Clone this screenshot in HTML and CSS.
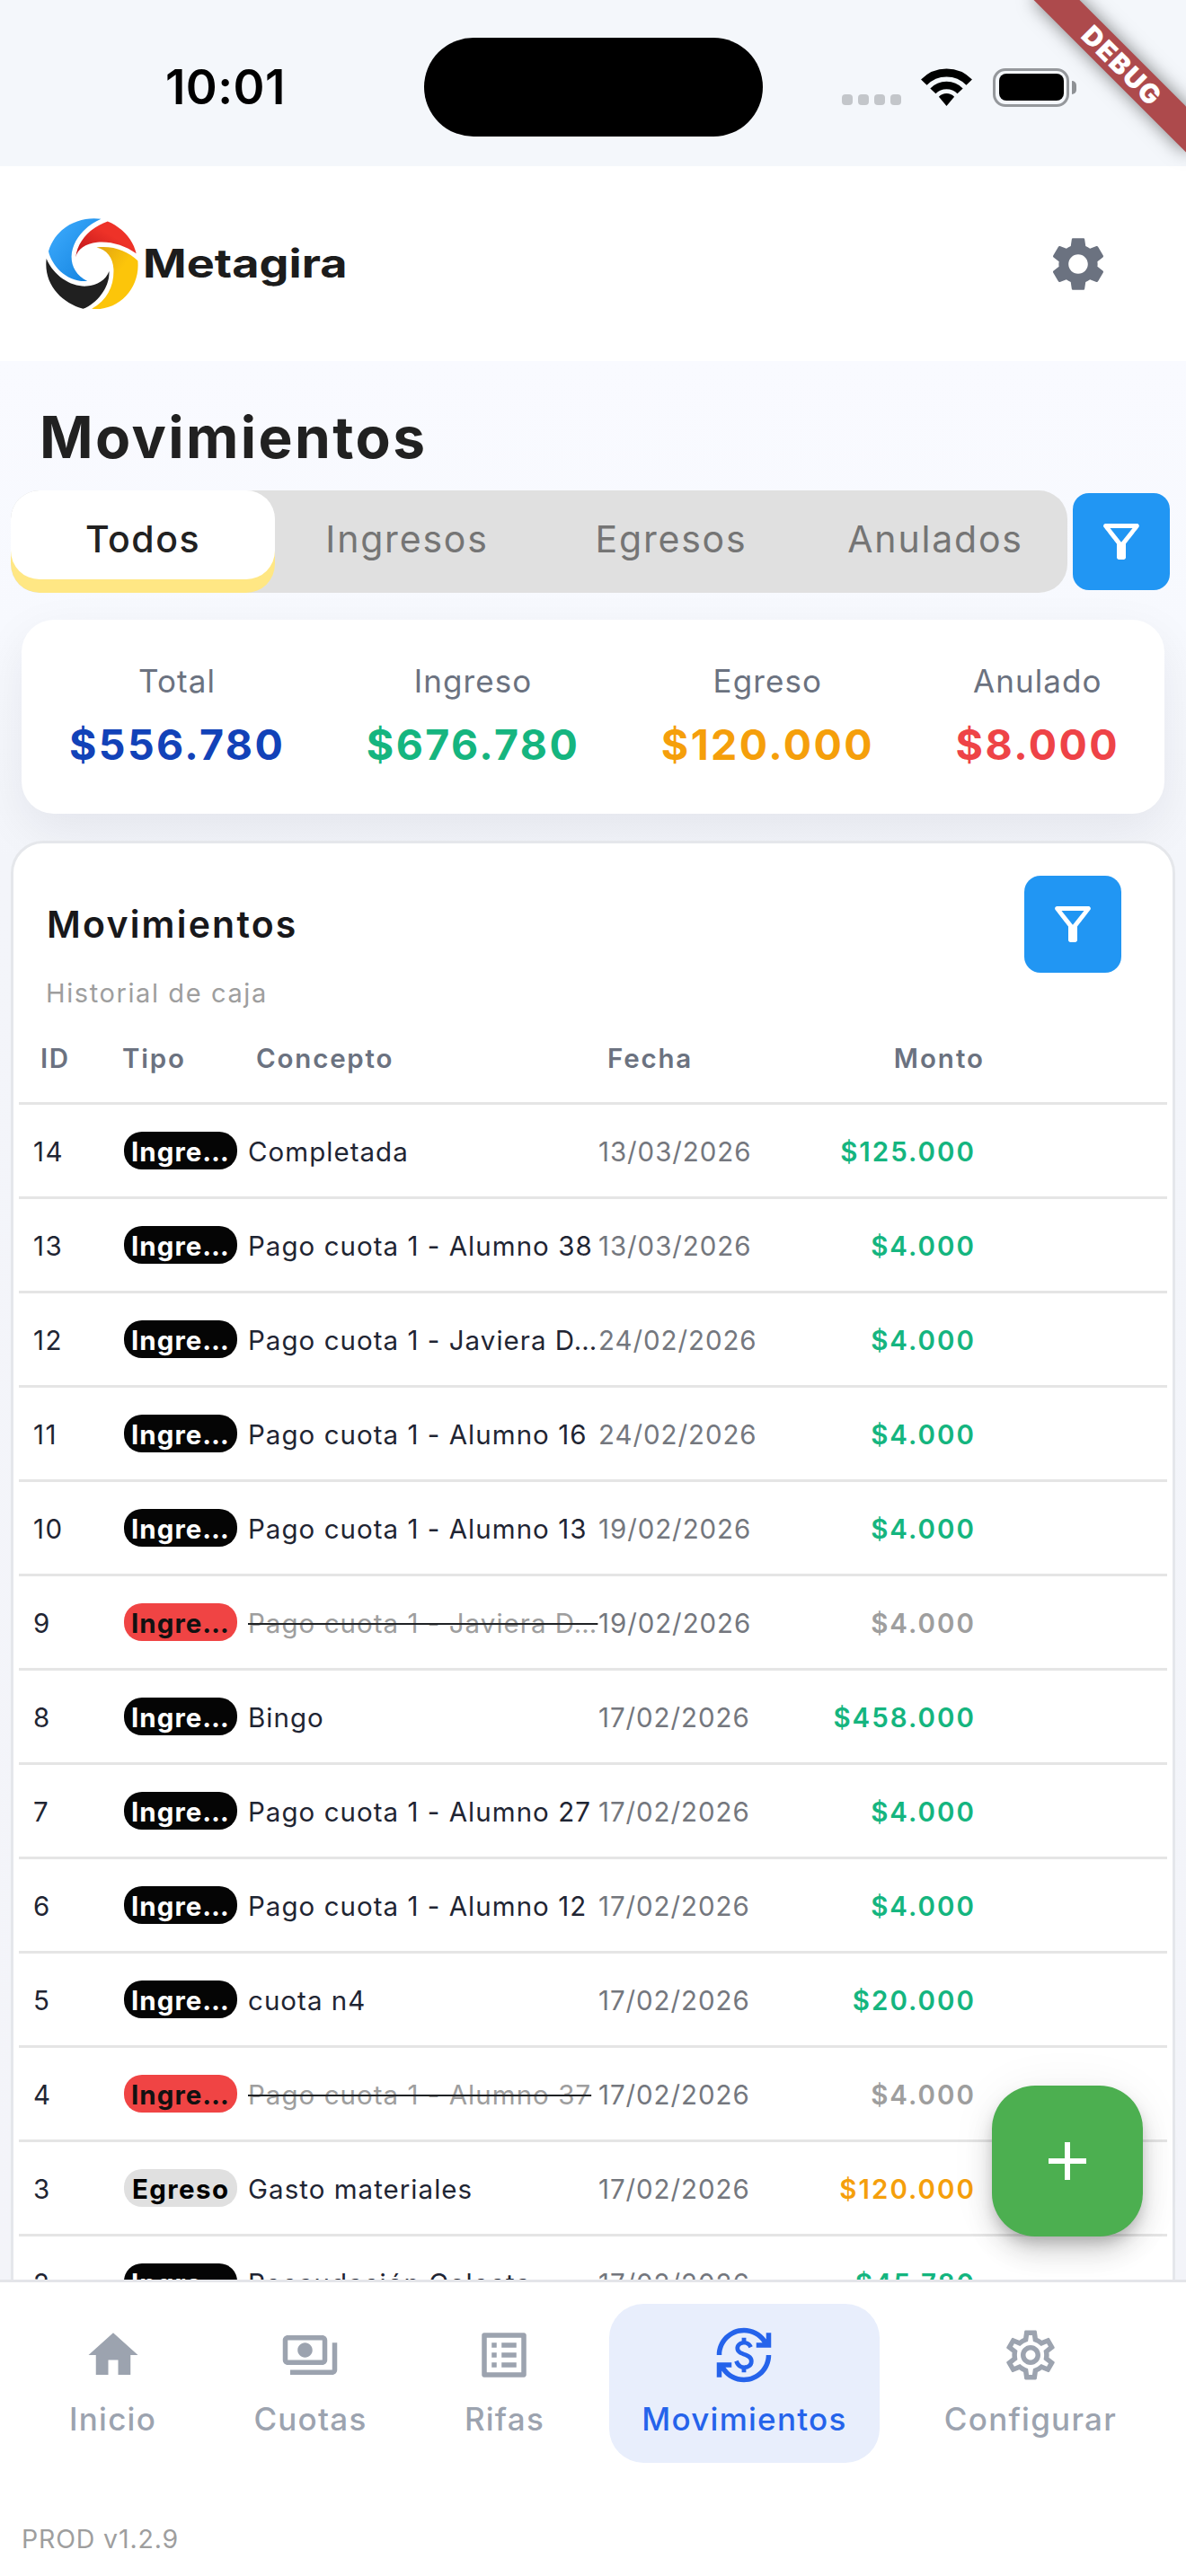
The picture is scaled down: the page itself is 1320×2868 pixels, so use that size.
FILE: index.html
```html
<!DOCTYPE html>
<html lang="es">
<head>
<meta charset="utf-8">
<title>Metagira - Movimientos</title>
<link rel="stylesheet" href="styles.css">
</head>
<body>
<div class="app">
  <div class="statusbar">
    <div class="time">10:01</div>
    <div class="island"></div>
    <div class="indicators">
      <div class="dots"><i></i><i></i><i></i><i></i></div>
      <svg class="wifi" viewBox="0 0 57 42" fill="none" stroke="#000">
        <path d="M3.3 15.7A35 35 0 0 1 53.7 15.7" stroke-width="9"/>
        <path d="M13.4 25.4A21 21 0 0 1 43.6 25.4" stroke-width="8.5"/>
        <path d="M19.9 31.7A12 12 0 0 1 37.1 31.7L28.5 42Z" fill="#000" stroke="none"/>
      </svg>
      <div class="battery"><div class="level"></div></div>
      <div class="nub"></div>
    </div>
  </div>

  <header class="header">
    <div class="brand">
      <svg class="logo" viewBox="33 40 310 306">
        <defs>
          <linearGradient id="blue" x1="0" y1="0" x2="1" y2="1"><stop offset="0.2" stop-color="#36a4f8"/><stop offset="1" stop-color="#0f7fdc"/></linearGradient>
          <linearGradient id="red" x1="0" y1="1" x2="1" y2="0"><stop offset="0.1" stop-color="#c4181c"/><stop offset="0.6" stop-color="#ee3228"/></linearGradient>
          <linearGradient id="yellow" x1="0" y1="0" x2="1" y2="1"><stop offset="0" stop-color="#dd9f12"/><stop offset="0.5" stop-color="#fcc50a"/></linearGradient>
        </defs>
        <path fill="url(#blue)" d="M218 42C150 32 68 65 42 150C52 198 105 256 172 250C136 232 119 202 119 168C121 112 165 65 218 42Z"/>
        <path fill="url(#red)" d="M240 50C285 68 325 108 336 158C298 130 250 116 205 120C165 125 140 142 133 170C140 115 180 72 240 50Z"/>
        <path fill="url(#yellow)" d="M203 137C260 130 308 150 341 182C350 270 280 352 187 343C240 312 262 265 260 210C258 170 237 145 203 137Z"/>
        <path fill="#202020" d="M35 175C60 235 120 270 170 267C205 265 235 245 245 217C248 270 205 325 158 343C85 322 25 260 35 175Z"/>
      </svg>
      <span class="wordmark">Metagira</span>
    </div>
    <svg class="gear" viewBox="0 0 24 24" fill="#6b7280"><path d="M19.14 12.94c.04-.3.06-.61.06-.94 0-.32-.02-.64-.07-.94l2.03-1.58c.18-.14.23-.41.12-.61l-1.92-3.32c-.12-.22-.37-.29-.59-.22l-2.39.96c-.5-.38-1.03-.7-1.62-.94l-.36-2.54c-.04-.24-.24-.41-.48-.41h-3.84c-.24 0-.43.17-.47.41l-.36 2.54c-.59.24-1.13.57-1.62.94l-2.39-.96c-.22-.08-.47 0-.59.22L2.74 8.87c-.12.21-.08.47.12.61l2.03 1.58c-.05.3-.09.63-.09.94s.02.64.07.94l-2.03 1.58c-.18.14-.23.41-.12.61l1.92 3.32c.12.22.37.29.59.22l2.39-.96c.5.38 1.03.7 1.62.94l.36 2.54c.05.24.24.41.48.41h3.84c.24 0 .44-.17.47-.41l.36-2.54c.59-.24 1.13-.56 1.62-.94l2.39.96c.22.08.47 0 .59-.22l1.92-3.32c.12-.22.07-.47-.12-.61l-2.01-1.58zM12 15.6c-1.98 0-3.6-1.62-3.6-3.6s1.62-3.6 3.6-3.6 3.6 1.62 3.6 3.6-1.62 3.6-3.6 3.6z"/></svg>
  </header>

  <main class="content">
    <h1 class="title">Movimientos</h1>

    <div class="filters">
      <div class="tabs">
        <div class="tab active">Todos</div>
        <div class="tab">Ingresos</div>
        <div class="tab">Egresos</div>
        <div class="tab">Anulados</div>
      </div>
      <button class="filter-btn"><svg viewBox="0 0 24 24" fill="#fff"><path d="M7 6h10l-5.01 6.3L7 6zm-2.75-.39C6.27 8.2 10 13 10 13v6c0 .55.45 1 1 1h2c.55 0 1-.45 1-1v-6s3.72-4.8 5.74-7.39A.998.998 0 0 0 18.95 4H5.04c-.83 0-1.3.95-.79 1.61z"/></svg></button>
    </div>

    <section class="summary">
      <div class="stat"><span class="label">Total</span><span class="value blue">$556.780</span></div>
      <div class="stat"><span class="label">Ingreso</span><span class="value green">$676.780</span></div>
      <div class="stat"><span class="label">Egreso</span><span class="value orange">$120.000</span></div>
      <div class="stat"><span class="label">Anulado</span><span class="value red">$8.000</span></div>
    </section>

    <section class="card">
      <div class="card-head">
        <h2>Movimientos</h2>
        <button class="filter-btn"><svg viewBox="0 0 24 24" fill="#fff"><path d="M7 6h10l-5.01 6.3L7 6zm-2.75-.39C6.27 8.2 10 13 10 13v6c0 .55.45 1 1 1h2c.55 0 1-.45 1-1v-6s3.72-4.8 5.74-7.39A.998.998 0 0 0 18.95 4H5.04c-.83 0-1.3.95-.79 1.61z"/></svg></button>
      </div>
      <p class="subtitle">Historial de caja</p>
      <div class="table">
        <div class="row head"><span class="id">ID</span><span>Tipo</span><span>Concepto</span><span>Fecha</span><span class="amount">Monto</span></div>
        <div class="row"><span class="id">14</span><span class="badge">Ingre…</span><span class="concept">Completada</span><span class="date">13/03/2026</span><span class="amount green">$125.000</span></div>
        <div class="row"><span class="id">13</span><span class="badge">Ingre…</span><span class="concept">Pago cuota 1 - Alumno 38</span><span class="date">13/03/2026</span><span class="amount green">$4.000</span></div>
        <div class="row"><span class="id">12</span><span class="badge">Ingre…</span><span class="concept">Pago cuota 1 - Javiera D…</span><span class="date">24/02/2026</span><span class="amount green">$4.000</span></div>
        <div class="row"><span class="id">11</span><span class="badge">Ingre…</span><span class="concept">Pago cuota 1 - Alumno 16</span><span class="date">24/02/2026</span><span class="amount green">$4.000</span></div>
        <div class="row"><span class="id">10</span><span class="badge">Ingre…</span><span class="concept">Pago cuota 1 - Alumno 13</span><span class="date">19/02/2026</span><span class="amount green">$4.000</span></div>
        <div class="row"><span class="id">9</span><span class="badge void">Ingre…</span><span class="concept"><s>Pago cuota 1 - Javiera D…</s></span><span class="date">19/02/2026</span><span class="amount muted">$4.000</span></div>
        <div class="row"><span class="id">8</span><span class="badge">Ingre…</span><span class="concept">Bingo</span><span class="date">17/02/2026</span><span class="amount green">$458.000</span></div>
        <div class="row"><span class="id">7</span><span class="badge">Ingre…</span><span class="concept">Pago cuota 1 - Alumno 27</span><span class="date">17/02/2026</span><span class="amount green">$4.000</span></div>
        <div class="row"><span class="id">6</span><span class="badge">Ingre…</span><span class="concept">Pago cuota 1 - Alumno 12</span><span class="date">17/02/2026</span><span class="amount green">$4.000</span></div>
        <div class="row"><span class="id">5</span><span class="badge">Ingre…</span><span class="concept">cuota n4</span><span class="date">17/02/2026</span><span class="amount green">$20.000</span></div>
        <div class="row"><span class="id">4</span><span class="badge void">Ingre…</span><span class="concept"><s>Pago cuota 1 - Alumno 37</s></span><span class="date">17/02/2026</span><span class="amount muted">$4.000</span></div>
        <div class="row"><span class="id">3</span><span class="badge expense">Egreso</span><span class="concept">Gasto materiales</span><span class="date">17/02/2026</span><span class="amount orange">$120.000</span></div>
        <div class="row"><span class="id">2</span><span class="badge">Ingre…</span><span class="concept">Recaudación Colecta</span><span class="date">17/02/2026</span><span class="amount green">$45.780</span></div>
      </div>
    </section>
    <button class="fab"><svg viewBox="0 0 24 24" fill="#fff"><path d="M19 13h-6v6h-2v-6H5v-2h6V5h2v6h6v2z"/></svg></button>
  </main>

  <footer class="bottom">
    <nav class="nav">
      <a class="item"><svg viewBox="0 0 24 24"><path d="M10 20v-6h4v6h5v-8h3L12 3 2 12h3v8z"/></svg><span>Inicio</span></a>
      <a class="item"><svg viewBox="0 0 24 24"><path d="M19 14V6c0-1.1-.9-2-2-2H3c-1.1 0-2 .9-2 2v8c0 1.1.9 2 2 2h14c1.1 0 2-.9 2-2zm-2 0H3V6h14v8zm-7-7c-1.66 0-3 1.34-3 3s1.34 3 3 3 3-1.34 3-3-1.34-3-3-3zm13 0v11c0 1.1-.9 2-2 2H4v-2h17V7h2z"/></svg><span>Cuotas</span></a>
      <a class="item"><svg viewBox="0 0 24 24"><path d="M19 5v14H5V5h14m1.1-2H3.9c-.5 0-.9.4-.9.9v16.2c0 .4.4.9.9.9h16.2c.4 0 .9-.5.9-.9V3.9c0-.5-.5-.9-.9-.9zM11 7h6v2h-6V7zm0 4h6v2h-6v-2zm0 4h6v2h-6v-2zM7 7h2v2H7V7zm0 4h2v2H7v-2zm0 4h2v2H7v-2z"/></svg><span>Rifas</span></a>
      <a class="item current"><svg viewBox="0 0 24 24"><path d="M12.89 11.1c-1.78-.59-2.64-.96-2.64-1.9 0-1.02 1.11-1.39 1.81-1.39 1.31 0 1.79.99 1.9 1.34l1.58-.67c-.15-.44-.82-1.91-2.66-2.23V5h-1.75v1.26c-2.6.56-2.62 2.85-2.62 2.96 0 2.27 2.25 2.91 3.35 3.31 1.58.56 2.28 1.07 2.28 2.03 0 1.13-1.05 1.61-1.98 1.61-1.82 0-2.34-1.87-2.4-2.09l-1.66.67c.63 2.19 2.28 2.78 3.02 2.96V19h1.75v-1.24c.52-.09 3.02-.59 3.02-3.22.01-1.39-.6-2.61-3-3.44zM3 21H1v-6h6v2H4.52c1.61 2.41 4.36 4 7.48 4 4.97 0 9-4.03 9-9h2c0 6.08-4.92 11-11 11-3.72 0-7.01-1.85-9-4.67V21zM1 12C1 5.92 5.92 1 12 1c3.72 0 7.01 1.85 9 4.67V3h2v6h-6V7h2.48C17.87 4.59 15.12 3 12 3c-4.97 0-9 4.03-9 9H1z"/></svg><span>Movimientos</span></a>
      <a class="item"><svg viewBox="0 0 24 24"><path d="M19.43 12.98c.04-.32.07-.64.07-.98 0-.34-.03-.66-.07-.98l2.11-1.65c.19-.15.24-.42.12-.64l-2-3.46c-.09-.16-.26-.25-.44-.25-.06 0-.12.01-.17.03l-2.49 1c-.52-.4-1.08-.73-1.69-.98l-.38-2.65C14.46 2.18 14.25 2 14 2h-4c-.25 0-.46.18-.49.42l-.38 2.65c-.61.25-1.17.59-1.69.98l-2.49-1c-.06-.02-.12-.03-.18-.03-.17 0-.34.09-.43.25l-2 3.46c-.13.22-.07.49.12.64l2.11 1.65c-.04.32-.07.65-.07.98 0 .33.03.66.07.98l-2.11 1.65c-.19.15-.24.42-.12.64l2 3.46c.09.16.26.25.44.25.06 0 .12-.01.17-.03l2.49-1c.52.4 1.08.73 1.69.98l.38 2.65c.03.24.24.42.49.42h4c.25 0 .46-.18.49-.42l.38-2.65c.61-.25 1.17-.59 1.69-.98l2.49 1c.06.02.12.03.18.03.17 0 .34-.09.43-.25l2-3.46c.12-.22.07-.49-.12-.64l-2.11-1.65zm-1.98-1.71c.04.31.05.52.05.73 0 .21-.02.43-.05.73l-.14 1.13.89.7 1.08.84-.7 1.21-1.27-.51-1.04-.42-.9.68c-.43.32-.84.56-1.25.73l-1.06.43-.16 1.13-.2 1.35h-1.4l-.19-1.35-.16-1.13-1.06-.43c-.43-.18-.83-.41-1.23-.71l-.91-.7-1.06.43-1.27.51-.7-1.21 1.08-.84.89-.7-.14-1.13c-.03-.31-.05-.54-.05-.74s.02-.43.05-.73l.14-1.13-.89-.7-1.08-.84.7-1.21 1.27.51 1.04.42.9-.68c.43-.32.84-.56 1.25-.73l1.06-.43.16-1.13.2-1.35h1.39l.19 1.35.16 1.13 1.06.43c.43.18.83.41 1.23.71l.91.7 1.06-.43 1.27-.51.7 1.21-1.07.85-.89.7.14 1.13zM12 8c-2.21 0-4 1.79-4 4s1.79 4 4 4 4-1.79 4-4-1.79-4-4-4zm0 6c-1.1 0-2-.9-2-2s.9-2 2-2 2 .9 2 2-.9 2-2 2z"/></svg><span>Configurar</span></a>
    </nav>
    <div class="version">PROD v1.2.9</div>
  </footer>

  <div class="debug"><div class="band">DEBUG</div></div>
</div>
</body>
</html>
```
FILE: styles.css
```css
* { box-sizing: border-box; }
body { margin: 0; font-family: Inter, "Liberation Sans", sans-serif; color: #212121; }
h1, h2, p { margin: 0; }
button { border: 0; padding: 0; }
svg { display: block; flex: none; }

.app {
  position: relative;
  width: 1320px;
  height: 2868px;
  display: flex;
  flex-direction: column;
  overflow: hidden;
  background: #f4f5fa;
}

/* status bar */
.statusbar {
  height: 185px;
  padding-top: 9px;
  display: grid;
  grid-template-columns: 472px 377px 471px;
  align-items: center;
  background: #f4f7fb;
}
.time { padding-left: 184px; font-size: 53px; font-weight: 600; letter-spacing: 0.45px; line-height: 64px; color: #000; }
.island { height: 110px; border-radius: 55px; background: #000; }
.indicators { display: flex; align-items: center; padding-left: 88px; }
.dots { display: flex; gap: 6px; margin: 28px 22px 0 0; }
.dots i { width: 12px; height: 12px; border-radius: 4px; background: #c3c6ca; }
.wifi { width: 57px; height: 42px; margin-right: 23px; }
.battery { width: 85px; height: 43px; padding: 3.5px; border: 3.5px solid #95989c; border-radius: 14px; }
.level { height: 100%; border-radius: 8px; background: #000; }
.nub { width: 5px; height: 15px; margin-left: 3px; border-radius: 0 5px 5px 0; background: #8e9195; }

/* brand header */
.header {
  height: 217px;
  padding: 0 84px 0 51px;
  display: flex;
  align-items: center;
  justify-content: space-between;
  background: #fff;
}
.brand { display: flex; align-items: center; gap: 5px; }
.logo { width: 103px; height: 102px; }
.wordmark { font-size: 44px; font-weight: 700; line-height: 54px; margin-top: -2px; color: #1c1c1c; transform: scaleX(1.187); transform-origin: left; }
.gear { width: 72px; height: 72px; }

/* content */
.content {
  position: relative;
  height: 2136px;
  overflow: hidden;
  padding: 26px 12px 0;
  background: linear-gradient(#f9faff, #f7f9fe 14%, #f3f5fa 26%, #f3f4f9);
}
.title { padding-left: 32px; font-size: 64px; font-weight: 700; letter-spacing: 2.4px; line-height: 118px; }

.filters { display: flex; align-items: center; justify-content: space-between; padding-right: 6px; }
.tabs { display: flex; width: 1176px; height: 114px; border-radius: 32px; background: #e0e0e0; overflow: hidden; }
.tab { flex: 1; height: 99px; text-align: center; font-size: 41px; letter-spacing: 1.8px; line-height: 109px; color: #757575; }
.tab.active { border-radius: 32px; background: #fff; box-shadow: 0 15px 0 #ffe784; color: #212121; font-weight: 500; letter-spacing: 1.5px; }

.filter-btn { display: grid; place-items: center; width: 108px; height: 108px; border-radius: 18px; background: #2196f3; }
.filter-btn svg { width: 60px; height: 60px; }

.summary {
  display: flex;
  justify-content: space-between;
  height: 216px;
  margin: 30px 12px;
  padding: 46px 50px 0 53px;
  border-radius: 36px;
  background: #fff;
  box-shadow: 0 18px 54px rgba(20, 20, 40, 0.07);
}
.stat { display: flex; flex-direction: column; align-items: center; gap: 18px; }
.label { font-size: 35px; letter-spacing: 1.1px; line-height: 45px; color: #6b7280; }
.value { font-size: 46.5px; font-weight: 700; letter-spacing: 2.4px; line-height: 60px; }

.blue { color: #1242b8; }
.green { color: #15b57f; }
.orange { color: #f59f0b; }
.red { color: #ee4347; }
.muted { color: #9e9e9e; }

.card {
  position: relative;
  height: 1700px;
  border: 3px solid #e5e7eb;
  border-radius: 36px;
  background: #fff;
}
.card-head { display: flex; align-items: center; justify-content: space-between; padding: 36px 57px 0 37px; }
.card-head h2 { font-size: 41px; font-weight: 600; letter-spacing: 2.2px; line-height: 50px; color: #18181b; }
.subtitle { padding-left: 36px; font-size: 29px; letter-spacing: 1.6px; line-height: 45px; color: #9e9e9e; }

.table { margin: 0 6px; }
.row {
  display: grid;
  grid-template-columns: 117px 138px 390px 200px 220px;
  align-items: center;
  height: 105px;
  border-bottom: 3px solid #e5e5e5;
  font-size: 29.5px;
  line-height: 36px;
  letter-spacing: 1.03px;
  white-space: nowrap;
  color: #1f2533;
}
.row > span { padding-top: 1px; }
.row .id { padding-left: 16px; letter-spacing: 1.5px; }
.row.head {
  grid-template-columns: 115px 149px 391px 200px 220px;
  height: 102px;
  font-weight: 600;
  letter-spacing: 1.8px;
  color: #6b7280;
}
.row.head .id { padding-left: 24px; }
.row .badge {
  width: 126px;
  height: 42px;
  padding: 1px 0 0 8px;
  border-radius: 20px;
  background: #050505;
  color: #fff;
  font-weight: 700;
  line-height: 43px;
}
.row .badge.void { background: #f04444; color: #111; }
.row .badge.expense { background: #e0e0e0; color: #000; letter-spacing: 1.4px; padding-left: 9px; }
.concept s { color: #9e9e9e; text-decoration: line-through 2px #1f2225; }
.date { color: #74777e; letter-spacing: 0.92px; }
.row .amount { justify-self: end; letter-spacing: 2px; }
.row:not(.head) .amount { font-weight: 600; }

.fab {
  position: absolute;
  right: 48px;
  bottom: 48px;
  display: grid;
  place-items: center;
  width: 168px;
  height: 168px;
  border-radius: 48px;
  background: #4caf50;
  box-shadow: 0 9px 15px -3px rgba(0, 0, 0, 0.2), 0 18px 30px rgba(0, 0, 0, 0.14), 0 3px 54px rgba(0, 0, 0, 0.06);
}
.fab svg { width: 72px; height: 72px; }

/* bottom navigation */
.bottom { flex: 1; border-top: 3px solid #e4e5e9; background: #fff; padding-top: 24px; }
.nav { display: flex; justify-content: space-between; padding: 0 41px; }
.item {
  display: flex;
  flex-direction: column;
  align-items: center;
  gap: 16px;
  height: 177px;
  padding: 24px 36px 0;
  border-radius: 38px;
  font-size: 35px;
  font-weight: 500;
  letter-spacing: 1.25px;
  line-height: 45px;
  color: #9ca3af;
}
.item svg { width: 66px; height: 66px; fill: currentColor; }
.item.current { background: #e8eefc; color: #2563eb; }
.version { margin-top: 67px; padding-left: 24px; font-size: 28.5px; letter-spacing: 0.84px; line-height: 36px; color: #9e9e9e; }

/* corner ribbon */
.debug { position: absolute; top: 0; right: 0; width: 190px; height: 190px; overflow: hidden; }
.band {
  position: absolute;
  left: -2px;
  top: 54px;
  width: 240px;
  height: 36px;
  transform: rotate(45deg);
  background: #ad4a4c;
  box-shadow: 0 0 20px rgba(0, 0, 0, 0.5);
  text-align: center;
  text-indent: 3px;
  font-size: 29.7px;
  font-weight: 900;
  letter-spacing: 1.7px;
  line-height: 36px;
  color: #fff;
}
```
